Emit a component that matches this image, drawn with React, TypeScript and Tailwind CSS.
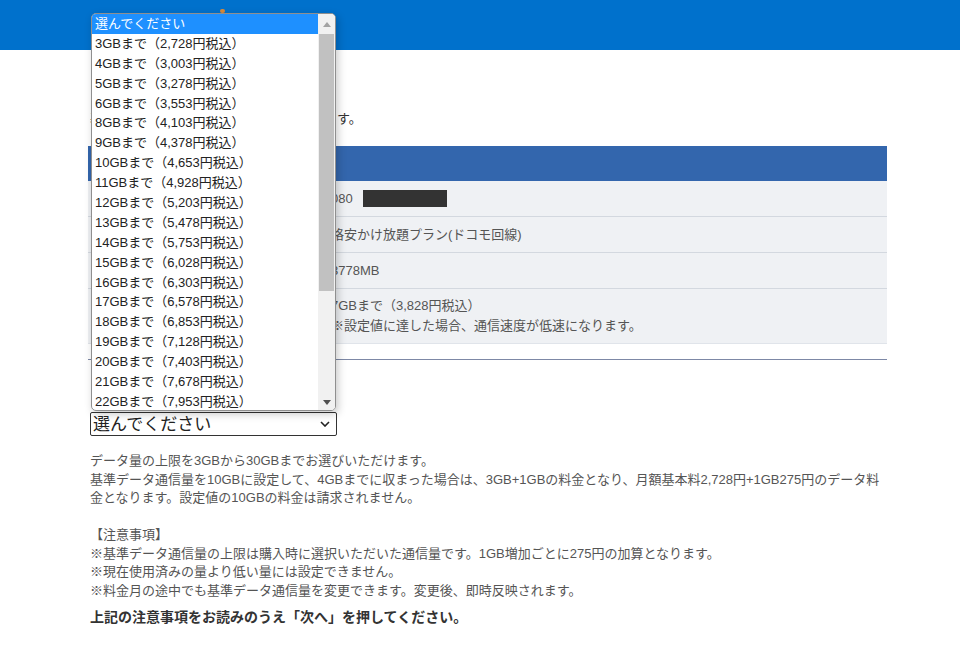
import React from "react";

const FONT = "font-['Liberation_Sans','Noto_Sans_CJK_JP',sans-serif]";

const options = [
  "選んでください",
  "3GBまで（2,728円税込）",
  "4GBまで（3,003円税込）",
  "5GBまで（3,278円税込）",
  "6GBまで（3,553円税込）",
  "8GBまで（4,103円税込）",
  "9GBまで（4,378円税込）",
  "10GBまで（4,653円税込）",
  "11GBまで（4,928円税込）",
  "12GBまで（5,203円税込）",
  "13GBまで（5,478円税込）",
  "14GBまで（5,753円税込）",
  "15GBまで（6,028円税込）",
  "16GBまで（6,303円税込）",
  "17GBまで（6,578円税込）",
  "18GBまで（6,853円税込）",
  "19GBまで（7,128円税込）",
  "20GBまで（7,403円税込）",
  "21GBまで（7,678円税込）",
  "22GBまで（7,953円税込）",
];

// left label column is covered by the open list
const rows = [
  { id: "tel", value: "080" },
  { id: "plan", value: "格安かけ放題プラン(ドコモ回線)" },
  { id: "usage", value: "3778MB" },
];

function OpenDropdown() {
  return (
    <div className="absolute left-[91px] top-[13px] w-[245px] h-[398px] bg-white border border-[#8f8f8f] rounded-[5px] shadow-[2px_3px_8px_rgba(0,0,0,0.22)] overflow-hidden flex">
      <ul className="flex-1 min-w-0">
        {options.map((o, i) => (
          <li
            key={o}
            className={`h-[19.9px] leading-[19.9px] pl-[3px] text-[13px] whitespace-nowrap ${
              i === 0 ? "bg-[#1e90ff] text-white" : "text-[#222]"
            }`}
          >
            {o}
          </li>
        ))}
      </ul>
      <div className="w-[17px] bg-[#f1f1f1] flex flex-col">
        <div className="h-[20px] flex items-center justify-center">
          <svg width="8" height="5" viewBox="0 0 8 5">
            <path d="M0 5 L4 0 L8 5 Z" fill="#a3a3a3" />
          </svg>
        </div>
        <div className="h-[257px] mx-[1px] bg-[#c1c1c1]" />
        <div className="flex-1" />
        <div className="h-[16px] flex items-center justify-center">
          <svg width="8" height="5" viewBox="0 0 8 5">
            <path d="M0 0 L8 0 L4 5 Z" fill="#505050" />
          </svg>
        </div>
      </div>
    </div>
  );
}

export default function App() {
  return (
    <div className={`relative w-[960px] min-h-[662px] bg-white ${FONT}`}>
      <header className="h-[50px] bg-[#0071cc] relative">
        <div className="absolute left-[220px] top-[9px] w-[5px] h-[4px] bg-[#d88a3a] rounded-sm" />
      </header>

      <main className="ml-[88px] w-[799px]">
        <div className="h-[58px]" />
        <p className="h-[38px] text-[13px] text-[#333] leading-[22px] pl-[2px]">
          基準データ通信量の上限を、変更いたします。
        </p>

        <div className="border-b border-[#e0e4ea]">
          <div className="h-[35px] bg-[#3366ad]" />
          {rows.map((r) => (
            <div key={r.id} className="flex h-[36px] bg-[#eff1f4] border-b border-[#d3d8df]">
              <div className="w-[243px]" />
              <div className="flex-1 flex items-center text-[13px] text-[#555]">
                {r.value}
                {r.id === "tel" && (
                  <span className="inline-block ml-[10px] w-[84px] h-[17px] bg-[#333]" />
                )}
              </div>
            </div>
          ))}
          <div className="flex h-[54px] bg-[#eff1f4]">
            <div className="w-[243px]" />
            <div className="flex-1 pt-[7px] text-[13px] text-[#555] leading-[20px]">
              <div>7GBまで（3,828円税込）</div>
              <div>※設定値に達した場合、通信速度が低速になります。</div>
            </div>
          </div>
        </div>

        <div className="h-[15px]" />
        <hr className="border-0 border-t border-[#7d88a6]" />

        <div className="h-[53px]" />

        <div className="ml-[2px] w-[247px] h-[24px] border border-[#333] rounded-[2px] flex items-center justify-between pl-[2px] pr-[6px] bg-white -mt-[1px]">
          <span className="text-[17px] text-[#222] leading-none">選んでください</span>
          <svg width="10" height="6" viewBox="0 0 10 6">
            <path d="M1 1 L5 5 L9 1" fill="none" stroke="#222" strokeWidth="1.6" />
          </svg>
        </div>

        <div className="mt-[16px] pl-[2px] text-[13px] text-[#555] leading-[18.5px]">
          <p>データ量の上限を3GBから30GBまでお選びいただけます。</p>
          <p>
            基準データ通信量を10GBに設定して、4GBまでに収まった場合は、3GB+1GBの料金となり、月額基本料2,728円+1GB275円のデータ料
            <br />
            金となります。設定値の10GBの料金は請求されません。
          </p>
          <p className="mt-[18.5px]">【注意事項】</p>
          <p>※基準データ通信量の上限は購入時に選択いただいた通信量です。1GB増加ごとに275円の加算となります。</p>
          <p>※現在使用済みの量より低い量には設定できません。</p>
          <p>※料金月の途中でも基準データ通信量を変更できます。変更後、即時反映されます。</p>
          <p className="mt-[8px] text-[14px] font-bold text-[#333]">上記の注意事項をお読みのうえ「次へ」を押してください。</p>
        </div>
      </main>

      <OpenDropdown />
    </div>
  );
}
